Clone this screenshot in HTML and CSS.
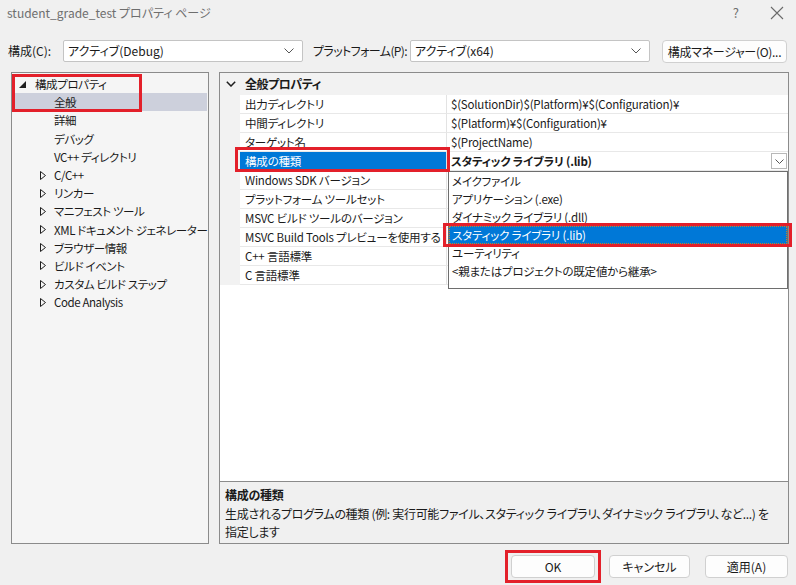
FILE: index.html
```html
<!DOCTYPE html>
<html lang="ja">
<head>
<meta charset="UTF-8">
<title>student_grade_test プロパティ ページ</title>
<link rel="stylesheet" href="styles.css">
</head>
<body>

	<div class="titlebar">
		<span class="title">student_grade_test プロパティ ページ</span>
		<span class="help">?</span>
		<svg class="close" width="14" height="14" viewBox="0 0 14 14"><path d="M1 1 L13 13 M13 1 L1 13" stroke="#6a6a6a" stroke-width="1.1" fill="none"/></svg>
	</div>

	<div class="toolbar">
		<label class="lbl-cfg">構成(C):</label>
		<div class="combo">
			<span>アクティブ(Debug)</span>
			<svg class="chev" width="10" height="6" viewBox="0 0 10 6"><polyline points="0.5,0.5 5,5 9.5,0.5" stroke="#555" fill="none"/></svg>
		</div>
		<label class="lbl-plat">プラットフォーム(P):</label>
		<div class="combo">
			<span>アクティブ(x64)</span>
			<svg class="chev" width="10" height="6" viewBox="0 0 10 6"><polyline points="0.5,0.5 5,5 9.5,0.5" stroke="#555" fill="none"/></svg>
		</div>
		<button type="button" class="btn cfgmgr">構成マネージャー(O)...</button>
	</div>

	<div class="main">
		<!-- 左側のツリー -->
		<ul class="tree">
			<li class="root">
				<svg class="tri" width="7" height="7" viewBox="0 0 7 7"><polygon points="7,0 7,7 0,7" fill="#1e1e1e"/></svg>
				構成プロパティ
			</li>
			<li class="leaf sel">全般</li>
			<li class="leaf">詳細</li>
			<li class="leaf">デバッグ</li>
			<li class="leaf">VC++ ディレクトリ</li>
			<li class="node"><svg class="tri" width="6" height="9" viewBox="0 0 6 9"><polygon points="0.5,0.5 5.5,4.5 0.5,8.5" fill="none" stroke="#1e1e1e"/></svg>C/C++</li>
			<li class="node"><svg class="tri" width="6" height="9" viewBox="0 0 6 9"><polygon points="0.5,0.5 5.5,4.5 0.5,8.5" fill="none" stroke="#1e1e1e"/></svg>リンカー</li>
			<li class="node"><svg class="tri" width="6" height="9" viewBox="0 0 6 9"><polygon points="0.5,0.5 5.5,4.5 0.5,8.5" fill="none" stroke="#1e1e1e"/></svg>マニフェスト ツール</li>
			<li class="node"><svg class="tri" width="6" height="9" viewBox="0 0 6 9"><polygon points="0.5,0.5 5.5,4.5 0.5,8.5" fill="none" stroke="#1e1e1e"/></svg>XML ドキュメント ジェネレーター</li>
			<li class="node"><svg class="tri" width="6" height="9" viewBox="0 0 6 9"><polygon points="0.5,0.5 5.5,4.5 0.5,8.5" fill="none" stroke="#1e1e1e"/></svg>ブラウザー情報</li>
			<li class="node"><svg class="tri" width="6" height="9" viewBox="0 0 6 9"><polygon points="0.5,0.5 5.5,4.5 0.5,8.5" fill="none" stroke="#1e1e1e"/></svg>ビルド イベント</li>
			<li class="node"><svg class="tri" width="6" height="9" viewBox="0 0 6 9"><polygon points="0.5,0.5 5.5,4.5 0.5,8.5" fill="none" stroke="#1e1e1e"/></svg>カスタム ビルド ステップ</li>
			<li class="node"><svg class="tri" width="6" height="9" viewBox="0 0 6 9"><polygon points="0.5,0.5 5.5,4.5 0.5,8.5" fill="none" stroke="#1e1e1e"/></svg>Code Analysis</li>
		</ul>

		<div class="pane">
			<!-- プロパティ グリッド -->
			<div class="grid">
				<div class="cat">
					<svg class="cat-chev" width="10" height="6" viewBox="0 0 10 6"><polyline points="0.8,0.8 5,5 9.2,0.8" stroke="#1e1e1e" stroke-width="1.5" fill="none"/></svg>
					<span>全般プロパティ</span>
				</div>
				<div class="row"><div class="name">出力ディレクトリ</div><div class="value">$(SolutionDir)$(Platform)¥$(Configuration)¥</div></div>
				<div class="row"><div class="name">中間ディレクトリ</div><div class="value">$(Platform)¥$(Configuration)¥</div></div>
				<div class="row"><div class="name">ターゲット名</div><div class="value">$(ProjectName)</div></div>
				<div class="row active">
					<div class="name">構成の種類</div>
					<div class="value">
						<b>スタティック ライブラリ (.lib)</b>
						<span class="dd-btn"><svg width="9" height="5" viewBox="0 0 9 5"><polyline points="0.5,0.5 4.5,4.5 8.5,0.5" stroke="#555" fill="none"/></svg></span>
					</div>
				</div>
				<div class="row"><div class="name">Windows SDK バージョン</div><div class="value"></div></div>
				<div class="row"><div class="name">プラットフォーム ツールセット</div><div class="value"></div></div>
				<div class="row"><div class="name">MSVC ビルド ツールのバージョン</div><div class="value"></div></div>
				<div class="row"><div class="name">MSVC Build Tools プレビューを使用する</div><div class="value"></div></div>
				<div class="row"><div class="name">C++ 言語標準</div><div class="value"></div></div>
				<div class="row"><div class="name">C 言語標準</div><div class="value"></div></div>

				<!-- 開いているドロップダウン -->
				<ul class="popup">
					<li>メイクファイル</li>
					<li>アプリケーション (.exe)</li>
					<li>ダイナミック ライブラリ (.dll)</li>
					<li class="cur">スタティック ライブラリ (.lib)</li>
					<li>ユーティリティ</li>
					<li>&lt;親またはプロジェクトの既定値から継承&gt;</li>
				</ul>
			</div>

			<div class="desc">
				<div class="desc-title">構成の種類</div>
				<div>生成されるプログラムの種類 (例: 実行可能ファイル、スタティック ライブラリ、ダイナミック ライブラリ、など...) を<br>指定します</div>
			</div>
		</div>
	</div>

	<div class="footer">
		<button type="button" class="btn ok">OK</button>
		<button type="button" class="btn cancel">キャンセル</button>
		<button type="button" class="btn apply">適用(A)</button>
	</div>

	<!-- 赤枠 -->
	<div class="mark m-tree"></div>
	<div class="mark m-row"></div>
	<div class="mark m-item"></div>
	<div class="mark m-ok"></div>

</body>
</html>
```

FILE: styles.css
```css
body {
	margin: 0;
	width: 796px;
	height: 585px;
	overflow: hidden;
	position: relative;
	background-color: #f0f0f0;
	color: #1a1a1a;
	font-family: "Noto Sans CJK JP", sans-serif;
	font-size: 12px;
	line-height: 18px;
	/* かなをプロポーショナルに詰める */
	font-feature-settings: "palt";
}

ul {
	list-style-type: none;
	margin: 0;
	padding: 0;
}

svg {
	flex-shrink: 0;
}

/* タイトルバー */
.titlebar {
	height: 28px;
	display: flex;
	align-items: center;
	padding: 0 12px 0 7px;
}

.title {
	color: #6e6e6e;
	flex: 1;
	margin-top: -3px;
}

.help {
	color: #6e6e6e;
	font-size: 13px;
	margin: -3px 31px 0 0;
}

.close {
	margin-top: -3px;
}

/* 構成・プラットフォーム */
.toolbar {
	display: flex;
	align-items: center;
	height: 22px;
	margin-top: 12px;
	padding-left: 8px;
	white-space: nowrap;
}

.toolbar > * {
	flex-shrink: 0;
}

.lbl-cfg {
	width: 55px;
}

.lbl-plat {
	width: 97px;
	margin-left: 10px;
	letter-spacing: -0.6px;
}

.combo {
	width: 240px;
	height: 22px;
	box-sizing: border-box;
	border: solid 1px #c4c4c4;
	border-radius: 2px;
	background-color: #fff;
	display: flex;
	align-items: center;
	justify-content: space-between;
	padding: 0 8px 0 4px;
}

.btn {
	font-family: inherit;
	font-size: 12px;
	font-feature-settings: "palt";
	color: #1a1a1a;
	height: 23px;
	padding: 0;
	background-color: #fdfdfd;
	border: solid 1px #d0d0d0;
	border-radius: 4px;
	white-space: nowrap;
}

.cfgmgr {
	width: 125px;
	margin-left: 12px;
	letter-spacing: -0.3px;
}

/* メイン */
.main {
	display: flex;
	gap: 10px;
	height: 472px;
	margin-top: 10px;
	padding-left: 11px;
}

.tree {
	width: 198px;
	box-sizing: border-box;
	border: solid 1px #8b8b8b;
	background-color: #f5f5f5;
	padding: 2px 1px 0 1px;
	overflow: hidden;
	font-size: 11.5px;
	letter-spacing: -0.4px;
}

.tree li {
	height: 18.2px;
	display: flex;
	align-items: center;
	white-space: nowrap;
}

.tree li.root {
	padding-left: 6px;
}

.tree li.root .tri {
	margin-right: 9px;
}

.tree li.leaf {
	padding-left: 41px;
}

.tree li.node {
	padding-left: 27px;
}

.tree li.node .tri {
	margin-right: 8px;
}

.tree li.sel {
	background-color: #cdd0dc;
}

.pane {
	width: 570px;
	display: flex;
	flex-direction: column;
}

/* プロパティ グリッド */
.grid {
	position: relative;
	height: 410px;
	box-sizing: border-box;
	border: solid 1px #8b8b8b;
	background-color: #fff;
	font-size: 11.5px;
	letter-spacing: -0.2px;
}

.cat {
	height: 22px;
	display: flex;
	align-items: center;
	background-color: #f2f2f2;
	font-weight: bold;
	font-size: 12px;
	letter-spacing: -0.5px;
}

.cat-chev {
	margin: 0 9px 0 6px;
}

.row {
	display: flex;
	height: 19px;
	padding-left: 20px;
	background-color: #f2f2f2;
}

.row .name {
	width: 207px;
	padding-left: 5px;
	box-sizing: border-box;
	border-right: solid 1px #e3e3e3;
	border-bottom: solid 1px #e8e8e8;
	background-color: #fff;
	white-space: nowrap;
	overflow: hidden;
}

.row .value {
	flex: 1;
	padding-left: 4px;
	border-bottom: solid 1px #e8e8e8;
	background-color: #fff;
	display: flex;
	justify-content: space-between;
	white-space: nowrap;
}

.row.active .name {
	background-color: #0078d7;
	color: #fff;
}

.dd-btn {
	width: 16px;
	height: 16px;
	margin: 1px 1px 0 0;
	box-sizing: border-box;
	border: solid 1px #b8b8b8;
	display: flex;
	align-items: center;
	justify-content: center;
}

.popup {
	position: absolute;
	left: 228px;
	top: 98px;
	width: 340px;
	height: 118px;
	box-sizing: border-box;
	border: solid 1px #6e6e6e;
	background-color: #fff;
}

.popup li {
	height: 18px;
	padding-left: 3px;
	white-space: nowrap;
}

.popup li.cur {
	background-color: #0078d7;
	color: #fff;
	outline: dotted 1px #c08030;
	outline-offset: -1px;
}

/* 説明 */
.desc {
	height: 62px;
	box-sizing: border-box;
	border: solid 1px #8b8b8b;
	border-top: none;
	padding: 4px 5px 0 5px;
	line-height: 18.5px;
	white-space: nowrap;
	letter-spacing: -0.3px;
}

.desc-title {
	font-weight: bold;
}

/* 下のボタン */
.footer {
	display: flex;
	justify-content: flex-end;
	gap: 14px;
	margin-top: 11px;
	padding-right: 8px;
}

.ok {
	width: 84px;
}

.cancel {
	width: 81px;
}

.apply {
	width: 83px;
	margin-left: 1px;
}

/* 赤枠 */
.mark {
	position: absolute;
	box-sizing: border-box;
	border: solid 3px #e3202a;
}

.m-tree {
	left: 12px;
	top: 74px;
	width: 130px;
	height: 38px;
}

.m-row {
	left: 235px;
	top: 147px;
	width: 215px;
	height: 25px;
}

.m-item {
	left: 443px;
	top: 223px;
	width: 349px;
	height: 24px;
}

.m-ok {
	left: 505px;
	top: 550px;
	width: 96px;
	height: 33px;
}
```
